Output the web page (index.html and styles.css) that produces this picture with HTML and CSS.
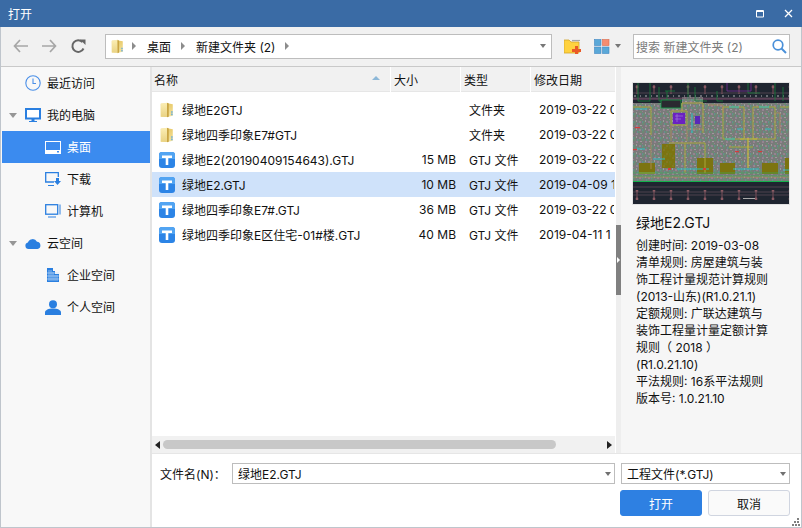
FILE: index.html
```html
<!DOCTYPE html>
<html lang="zh">
<head>
<meta charset="utf-8">
<title>打开</title>
<link rel="stylesheet" href="styles.css">
</head>
<body>
<svg class="defs" width="0" height="0">
  <defs>
    <linearGradient id="fold-l" x1="0" y1="0" x2="0" y2="1"><stop offset="0" stop-color="#fbeeb4"/><stop offset="1" stop-color="#e9d283"/></linearGradient>
    <linearGradient id="fold-r" x1="0" y1="0" x2="0" y2="1"><stop offset="0" stop-color="#e9cb6c"/><stop offset="1" stop-color="#f3e3a0"/></linearGradient>
    <symbol id="folder" viewBox="0 0 16 18">
      <path d="M1 2 L8.500 1.500 L14.500 2.500 V15.500 L8.500 16.800 L1 16.500 Z" fill="url(#fold-r)"/>
      <path d="M1 2 L8 .8 V16.800 L1 16.500 Z" fill="url(#fold-l)"/>
      <path d="M8 .8 L10 1.800 V16.500 L8 17.200 Z" fill="#c9a544"/>
      <path d="M12.600 10.500 h1.800 v1.500 h-1.800 Z M12.600 13 h1.800 v2 h-1.800 Z" fill="#6fb0d8"/>
    </symbol>
    <symbol id="gtj" viewBox="0 0 16 16">
      <rect width="16" height="16" rx="3" fill="#2c84e6"/>
      <path d="M0 3 a3 3 0 0 1 3 -3 h10 a3 3 0 0 1 3 3 v4 H0 Z" fill="#52a4f2"/>
      <path d="M3 3.500 H13 V6 H9.300 V13 H6.700 V6 H3 Z" fill="#fff"/>
    </symbol>
    <pattern id="cad" width="9" height="8" patternUnits="userSpaceOnUse">
      <rect width="9" height="8" fill="#7a7a7a"/>
      <path d="M0 1h2M6 0v2M7 5h2M2 6v2" stroke="#4fa968" stroke-width=".7"/>
      <path d="M3 3h2M6 7h2M0 4v1" stroke="#c995bb" stroke-width=".7"/>
      <path d="M3 6h1M8 2v1" stroke="#dedede" stroke-width=".7"/>
      <path d="M4 1h1M0 7h1" stroke="#3cb7bb" stroke-width=".7"/>
    </pattern>
    <pattern id="cad2" width="9" height="8" patternUnits="userSpaceOnUse">
      <path d="M0 1h2M6 0v2M7 5h2M2 6v2" stroke="#5d9f58" stroke-width=".6"/>
      <path d="M3 3h2M6 7h2" stroke="#c9a8a0" stroke-width=".6"/>
      <path d="M4 1h1M0 7h1" stroke="#3cb7bb" stroke-width=".6"/>
    </pattern>
    <pattern id="tick" width="17" height="8" patternUnits="userSpaceOnUse">
      <path d="M4 0v8" stroke="#9a5a63" stroke-width=".8"/>
      <circle cx="4" cy="4" r="1.400" fill="#8a5a63"/>
    </pattern>
    <pattern id="dots" width="11" height="3" patternUnits="userSpaceOnUse">
      <path d="M1 1h2M7 1h1" stroke="#d8d8d8" stroke-width=".8"/>
    </pattern>
  </defs>
</svg>
<div class="window">
  <header class="titlebar">
    <span class="title">打开</span>
    <div class="wincontrols">
      <svg width="9" height="8" viewBox="0 0 9 8"><path d="M.5 .5h7v6.500h-7zM.5 1.500h7" fill="none" stroke="#fff"/></svg>
      <svg width="9" height="9" viewBox="0 0 9 9"><path d="M1 1l7 7M8 1L1 8" stroke="#fff" stroke-width="1.300"/></svg>
    </div>
  </header>

  <div class="toolbar">
    <div class="navs">
      <svg width="15" height="14" viewBox="0 0 15 14"><path d="M7 1L1.500 7 7 13M1.500 7H15" fill="none" stroke="#a6a6a6" stroke-width="1.700"/></svg>
      <svg width="15" height="14" viewBox="0 0 15 14"><path d="M8 1l5.500 6L8 13M13.500 7H0" fill="none" stroke="#a6a6a6" stroke-width="1.700"/></svg>
      <svg width="15" height="15" viewBox="0 0 15 15"><path d="M12.500 9.500A5.800 5.800 0 1 1 11.500 3.200" fill="none" stroke="#666" stroke-width="2"/><path d="M9 0.500h5.500v5.500z" fill="#666"/></svg>
    </div>
    <div class="address">
      <svg class="addr-folder" width="13" height="17"><use href="#folder"/></svg>
      <i class="crumb"></i><span class="crumb-text">桌面</span>
      <i class="crumb"></i><span class="crumb-text">新建文件夹 (2)</span>
      <i class="crumb"></i>
      <i class="caret addr-caret"></i>
    </div>
    <svg class="newfolder" width="17" height="15" viewBox="0 0 17 15">
      <path d="M0 1h5l2 2h8v11H0z" fill="#ffd23f" stroke="#d2a42c" stroke-width=".8"/>
      <path d="M8 1.500h8" stroke="#a8a8a8" stroke-width="1.200"/>
      <path d="M11 7h3v3h3v3h-3v2h-3v-2H8v-3h3z" fill="#ea5a26"/>
    </svg>
    <div class="viewbtn">
      <svg width="16" height="15" viewBox="0 0 16 15">
        <rect x=".5" y=".5" width="6.500" height="6" fill="#5aa8d8" stroke="#3f86c4" stroke-width=".6"/>
        <rect x="8.500" y=".5" width="6.500" height="6" fill="#f58c70" stroke="#d9694c" stroke-width=".6"/>
        <rect x=".5" y="8" width="6.500" height="6.500" fill="#5aa8d8" stroke="#3f86c4" stroke-width=".6"/>
        <rect x="8.500" y="8" width="6.500" height="6.500" fill="#5aa8d8" stroke="#3f86c4" stroke-width=".6"/>
      </svg>
      <i class="caret"></i>
    </div>
    <div class="search">
      <span>搜索 新建文件夹 (2)</span>
      <svg width="15" height="15" viewBox="0 0 15 15"><circle cx="6" cy="6" r="4.800" fill="none" stroke="#4a90d9" stroke-width="1.700"/><path d="M9.500 9.500L14 14" stroke="#4a90d9" stroke-width="2"/></svg>
    </div>
  </div>

  <div class="main">
    <nav class="sidebar">
      <div class="nav-item lvl1"><i class="tree"></i>
        <svg width="16" height="16" viewBox="0 0 16 16"><circle cx="8" cy="8" r="7.200" fill="none" stroke="#4a8fe8" stroke-width="1.100"/><path d="M8 3.500V8.500H11" fill="none" stroke="#4a8fe8" stroke-width="1.100"/></svg>
        <span>最近访问</span></div>
      <div class="nav-item lvl1"><i class="tree open"></i>
        <svg width="16" height="14" viewBox="0 0 16 14"><rect x="1" y="1" width="14" height="9.500" fill="#fff" stroke="#2a7fe0" stroke-width="2"/><path d="M4 13h8v1H4zM6.500 11h3v2h-3z" fill="#2a7fe0"/></svg>
        <span>我的电脑</span></div>
      <div class="nav-item lvl2 active">
        <svg width="16" height="13" viewBox="0 0 16 13"><rect x=".5" y=".5" width="15" height="12" fill="none" stroke="#fff"/><rect x="1" y="9" width="14" height="3.500" fill="#fff"/><rect x="12" y="10" width="2" height="1.500" fill="#3b8bef"/></svg>
        <span>桌面</span></div>
      <div class="nav-item lvl2">
        <svg width="16" height="14" viewBox="0 0 16 14"><path d="M9 10H.7V.7h12.600V5" fill="none" stroke="#2a7fe0" stroke-width="1.300"/><path d="M3 13h6v1H3z" fill="#2a7fe0"/><path d="M11 6h3v3h2l-3.500 4L9 9h2z" fill="#2a7fe0"/></svg>
        <span>下载</span></div>
      <div class="nav-item lvl2">
        <svg width="16" height="14" viewBox="0 0 16 14"><rect x=".7" y=".7" width="12" height="9.500" fill="none" stroke="#2a7fe0" stroke-width="1.300"/><path d="M15 .5v10" stroke="#2a7fe0"/><path d="M3 12.500h8v1H3z" fill="#2a7fe0"/></svg>
        <span>计算机</span></div>
      <div class="nav-item lvl1"><i class="tree open"></i>
        <svg width="16" height="11" viewBox="0 0 16 11"><path d="M3.500 11a3.300 3.300 0 0 1-.6-6.500A5 5 0 0 1 12 3.700 3.700 3.700 0 0 1 12.500 11z" fill="#2a7fe0"/></svg>
        <span>云空间</span></div>
      <div class="nav-item lvl2">
        <svg width="14" height="14" viewBox="0 0 14 14"><path d="M1 0h6v3h2v3h4v8H1z" fill="#2a7fe0"/><path d="M3 2v11M5 2v11M7 4v9M9 7v6M11 7v6M1 5h12M1 8h12M1 11h12" stroke="#cfe2f8" stroke-width=".6"/></svg>
        <span>企业空间</span></div>
      <div class="nav-item lvl2">
        <svg width="16" height="15" viewBox="0 0 16 15"><circle cx="8" cy="4.200" r="4" fill="#2a7fe0"/><path d="M0 15v-2.500C0 10 3.500 8.500 8 8.500s8 1.500 8 4V15z" fill="#2a7fe0"/></svg>
        <span>个人空间</span></div>
    </nav>

    <section class="files">
      <div class="list-area">
        <div class="list-head">
          <div class="col-name head">名称<i class="sort"></i></div>
          <div class="col-size head">大小</div>
          <div class="col-type head">类型</div>
          <div class="col-date head">修改日期</div>
        </div>
        <div class="rows">
          <div class="row"><div class="col-name cell"><svg width="16" height="16"><use href="#folder"/></svg><span>绿地E2GTJ</span></div><div class="col-size cell num"></div><div class="col-type cell">文件夹</div><div class="col-date cell">2019-03-22 0</div></div>
          <div class="row"><div class="col-name cell"><svg width="16" height="16"><use href="#folder"/></svg><span>绿地四季印象E7#GTJ</span></div><div class="col-size cell num"></div><div class="col-type cell">文件夹</div><div class="col-date cell">2019-03-22 0</div></div>
          <div class="row"><div class="col-name cell"><svg width="16" height="16"><use href="#gtj"/></svg><span>绿地E2(20190409154643).GTJ</span></div><div class="col-size cell num">15 MB</div><div class="col-type cell">GTJ 文件</div><div class="col-date cell">2019-03-22 0</div></div>
          <div class="row selected"><div class="col-name cell"><svg width="16" height="16"><use href="#gtj"/></svg><span>绿地E2.GTJ</span></div><div class="col-size cell num">10 MB</div><div class="col-type cell">GTJ 文件</div><div class="col-date cell">2019-04-09 1</div></div>
          <div class="row"><div class="col-name cell"><svg width="16" height="16"><use href="#gtj"/></svg><span>绿地四季印象E7#.GTJ</span></div><div class="col-size cell num">36 MB</div><div class="col-type cell">GTJ 文件</div><div class="col-date cell">2019-03-22 0</div></div>
          <div class="row"><div class="col-name cell"><svg width="16" height="16"><use href="#gtj"/></svg><span>绿地四季印象E区住宅-01#楼.GTJ</span></div><div class="col-size cell num">40 MB</div><div class="col-type cell">GTJ 文件</div><div class="col-date cell">2019-04-11 1</div></div>
        </div>
        <div class="hscroll">
          <i class="arrow-l"></i>
          <div class="track"><div class="thumb"></div></div>
          <i class="arrow-r"></i>
        </div>
      </div>
      <div class="splitter"><div class="handle"><i></i></div></div>
      <aside class="preview">
        <div class="thumbnail">
          <svg width="156" height="121" viewBox="0 0 156 121">
            <rect width="156" height="121" fill="#1f2530"/>
            <rect y="20" width="156" height="78" fill="url(#cad)"/>
            <rect x="49" y="14" width="21" height="8" fill="url(#cad)"/>
            <rect y="2" width="156" height="9" fill="url(#tick)"/>
            <rect y="107" width="156" height="10" fill="url(#tick)"/>
            <rect y="11" width="156" height="3" fill="url(#dots)"/>
            <path d="M0 10H156M0 15H156M0 104H156M0 109H156M0 112H156" stroke="#5b4a55" stroke-width=".8"/>
            <path d="M0 16H49M70 16H156" stroke="#a35c88" stroke-width=".7"/>
            <path d="M0 98.500H156" stroke="#13b14b" stroke-width="1.200"/>
            <path d="M5 0v18h12V0M26 4v14h8V8M32 8h10M55 0v14M62 4v14h12M84 8v10h6M115 0v10h12M142 0v18M150 4v14" fill="none" stroke="#16803a" stroke-width=".8"/>
            <path d="M94 0v8h24V0" fill="none" stroke="#7a2f9a" stroke-width=".8"/>
            <path d="M28 25h20v-8h-20z" fill="#2a2a30" stroke="#16a34a" stroke-width=".8"/>
            <g fill="#7c7410">
              <rect x="29" y="61" width="13" height="24"/><rect x="6" y="80" width="16" height="11"/>
              <rect x="64" y="75" width="16" height="16"/><rect x="87" y="80" width="15" height="11"/><rect x="129" y="80" width="16" height="11"/><rect x="152" y="75" width="4" height="16"/>
            </g>
            <rect x="29" y="61" width="13" height="24" fill="url(#cad2)" opacity=".35"/>
            <g fill="none" stroke="#a9a63a" stroke-width="1">
              <path d="M0 24H18V52M38 28h16v14H38zM90 24h21v32H90zM120 24h22v32H120zM147 24h9M49 20h21M49 20v8M70 20v30M52 60v30M72 60v30M6 90h16M36 60h36M96 64h24"/>
            </g>
            <g fill="none" stroke="#b48c5a" stroke-width=".8">
              <path d="M55 46h14M38 42v16M54 42v16M75 22h15v8M143 30h4v20M18 56v30M0 94H156"/>
            </g>
            <rect x="40" y="30" width="12" height="11" fill="#6a22c2"/>
            <path d="M42 33h8M42 36h6M44 31v8" stroke="#a98ad8" stroke-width=".6"/>
            <rect x="62" y="33" width="5" height="8" fill="#5a28b8"/>
            <g stroke="#26c6cf" stroke-width=".9" fill="none">
              <path d="M2 26H14M96 24h10M126 24h10M44 86H76M100 86h26M150 87h6M59 30v20M104 46h6M132 46h6M20 76h12M4 66h8M92 56h10"/>
            </g>
            <g fill="#d83a3a">
              <rect x="35" y="85" width="3" height="2"/><rect x="70" y="85" width="3" height="2"/><rect x="102" y="68" width="4" height="1.200"/><rect x="125" y="68" width="4" height="1.200"/><rect x="2" y="44" width="5" height="1.200"/><rect x="0" y="66" width="4" height="1.200"/>
            </g>
            <path d="M115 55v30M107 56h17" stroke="#c9bb3a" stroke-width="1.200"/>
            <path d="M0 90H156M0 93H156" stroke="#3cae5d" stroke-width=".7" fill="none"/>
            <rect x="110" y="115" width="12" height="1" fill="#a9a9a9"/>
          </svg>
        </div>
        <h2 class="pv-title">绿地E2.GTJ</h2>
        <p class="pv-info">创建时间: 2019-03-08<br>清单规则: 房屋建筑与装<br>饰工程计量规范计算规则<br>(2013-山东)(R1.0.21.1)<br>定额规则: 广联达建筑与<br>装饰工程量计量定额计算<br>规则（ 2018 ）<br>(R1.0.21.10)<br>平法规则: 16系平法规则<br>版本号: 1.0.21.10</p>
      </aside>
    </section>

    <footer class="bottom">
      <div class="field-row">
        <label class="fname-label">文件名(N)：</label>
        <div class="combo fname"><span>绿地E2.GTJ</span><i class="caret"></i></div>
        <div class="combo ftype"><span>工程文件(*.GTJ)</span><i class="caret"></i></div>
      </div>
      <div class="btn-row">
        <button class="btn primary">打开</button>
        <button class="btn">取消</button>
      </div>
      <svg class="grip" width="8" height="8" viewBox="0 0 8 8"><path d="M5 0h2v2H5zM2 3h2v2H2zM5 3h2v2H5zM0 6h2v2H0zM3 6h2v2H3zM6 6h2v2H6z" fill="#7f7f7f"/></svg>
    </footer>
  </div>
</div>
</body>
</html>
```
FILE: styles.css
```css
* { box-sizing: border-box; }
html, body { margin: 0; padding: 0; height: 100%; overflow: hidden; }
body {
  font-family: "Inter", "Noto Sans CJK SC", sans-serif;
  font-size: 12px;
  color: #111;
  background: #fff;
}
.defs { position: absolute; }
i { display: block; font-style: normal; }
svg { display: block; flex: none; }

.window {
  width: 802px;
  height: 528px;
  display: flex;
  flex-direction: column;
  border: 1px solid #bfc5cc;
  border-top: 0;
}

.titlebar {
  height: 27px;
  margin: 0 -1px;
  flex: none;
  background: #3a6ba5;
  color: #fff;
  display: flex;
  align-items: center;
  justify-content: space-between;
  padding: 0 9px 0 8px;
}
.wincontrols { display: flex; align-items: center; gap: 19px; }

.toolbar {
  height: 40px;
  flex: none;
  background: #f1f1f1;
  border-bottom: 1px solid #c9c9c9;
  display: flex;
  align-items: center;
  padding: 0 11px 1px 12px;
}
.navs { display: flex; align-items: center; gap: 14px; width: 92px; }
.address {
  width: 447px;
  height: 25px;
  background: #fff;
  border: 1px solid #bdbdbd;
  display: flex;
  align-items: center;
  padding: 0 5px;
}
.addr-folder { margin-right: 8px; }
.crumb {
  width: 0; height: 0;
  border-left: 4px solid #8c8c8c;
  border-top: 4px solid transparent;
  border-bottom: 4px solid transparent;
}
.crumb-text { margin: 0 10px 0 11px; }
.caret {
  width: 0; height: 0;
  border-top: 4px solid #777;
  border-left: 3px solid transparent;
  border-right: 3px solid transparent;
}
.addr-caret { margin-left: auto; }
.newfolder { margin-left: 12px; }
.viewbtn { display: flex; align-items: center; gap: 5px; margin-left: 13px; width: 39px; }
.search {
  flex: 1;
  height: 25px;
  background: #fff;
  border: 1px solid #bdbdbd;
  display: flex;
  align-items: center;
  justify-content: space-between;
  padding: 0 2px 0 2px;
  color: #7a7a7a;
}

.main {
  flex: 1;
  min-height: 0;
  display: grid;
  grid-template-columns: 151px 1fr;
  grid-template-rows: 386px 1fr;
}

.sidebar {
  grid-row: 1 / 3;
  background: #f8f8f8;
  border-right: 2px solid #e4e4e4;
}
.nav-item {
  height: 32px;
  display: flex;
  align-items: center;
  margin-left: 1px;
}
.nav-item span { margin-bottom: 2px; }
.lvl1 { padding-left: 7px; }
.lvl1 > svg { margin-left: 7px; margin-right: 6px; }
.lvl2 { padding-left: 43px; }
.lvl2 > svg { margin-right: 6px; }
.lvl2 > svg[width="14"] { margin-left: 1px; margin-right: 7px; }
.tree { width: 9px; height: 5px; }
.tree.open {
  width: 0; height: 0;
  border-top: 5px solid #969696;
  border-left: 4px solid transparent;
  border-right: 4px solid transparent;
  margin-right: 1px;
}
.active { background: #3b8bef; color: #fff; }

.files { display: flex; min-width: 0; min-height: 0; }
.list-area { width: 463px; display: flex; flex-direction: column; }
.list-head { height: 25px; display: flex; background: #fff; flex: none; }
.head {
  background: #f1f1f1;
  display: flex;
  align-items: center;
  margin-right: 1px;
  padding-left: 3px;
  border-bottom: 1px solid #e6e6e6;
}
.head.col-name { width: 238px; padding-left: 2px; position: relative; }
.head.col-size, .head.col-type { width: 69px; }
.head.col-date { width: 84px; margin-right: 0; }
.sort {
  position: absolute;
  right: 10px;
  top: 9px;
  width: 0; height: 0;
  border-bottom: 4px solid #8db8d8;
  border-left: 4px solid transparent;
  border-right: 4px solid transparent;
}
.rows { flex: 1; padding-top: 5px; overflow: hidden; background: #fff; }
.row { display: flex; height: 25px; }
.selected { background: #cfe2fa; }
.cell { display: flex; align-items: center; white-space: nowrap; overflow: hidden; }
.row .col-name { width: 239px; padding-left: 7px; gap: 7px; }
.row .col-size { width: 69px; justify-content: flex-end; padding-right: 4px; }
.row .col-type { width: 70px; padding-left: 9px; }
.row .col-date { width: 84px; padding-left: 9px; }
.hscroll {
  height: 17px;
  flex: none;
  background: #f1f1f1;
  display: flex;
  align-items: center;
  padding: 0 3px;
}
.arrow-l, .arrow-r {
  width: 0; height: 0;
  border-top: 4px solid transparent;
  border-bottom: 4px solid transparent;
}
.arrow-l { border-right: 5px solid #222; }
.arrow-r { border-left: 5px solid #222; }
.track { flex: 1; margin: 0 3px; }
.thumb { width: 393px; height: 9px; border-radius: 5px; background: #c8c8c8; }

.splitter { width: 5px; flex: none; background: #eeeeee; position: relative; margin-left: 1px; }
.handle {
  position: absolute;
  left: 0;
  top: 158px;
  width: 5px;
  height: 70px;
  background: #808080;
  display: flex;
  align-items: center;
  justify-content: center;
}
.handle i {
  width: 0; height: 0;
  border-left: 3px solid #fff;
  border-top: 3px solid transparent;
  border-bottom: 3px solid transparent;
}
.preview {
  flex: 1;
  background: #f6f6f6;
  padding: 15px 11px 0 11px;
  min-width: 0;
}
.thumbnail {
  width: 158px;
  height: 123px;
  border: 1px solid #e2e2e2;
  background: #fff;
}
.pv-title { margin: 8px 0 0 4px; font-size: 14px; font-weight: 400; line-height: 20px; }
.pv-info { margin: 4px 0 0 4px; line-height: 17px; white-space: nowrap; }

.bottom {
  background: #fff;
  border-top: 1px solid #e6e6e6;
  padding: 9px 11px 0 8px;
  position: relative;
}
.field-row { display: flex; align-items: center; }
.fname-label { width: 72px; }
.combo {
  height: 21px;
  border: 1px solid #bdbdbd;
  display: flex;
  align-items: center;
  justify-content: space-between;
  padding: 0 3px 0 5px;
}
.fname { width: 383px; margin-right: 6px; }
.ftype { width: 169px; }
.combo .caret { border-top-color: #707070; }
.btn-row { display: flex; justify-content: flex-end; gap: 6px; margin-top: 6px; }
.btn {
  width: 82px;
  height: 26px;
  border: 1px solid #d0d5e0;
  border-radius: 3px;
  background: #fafafa;
  font: inherit;
  color: #111;
  padding: 0;
}
.primary { background: #2e80e2; border-color: #2e80e2; color: #fff; }
.grip { position: absolute; right: 1px; bottom: 1px; }
```
